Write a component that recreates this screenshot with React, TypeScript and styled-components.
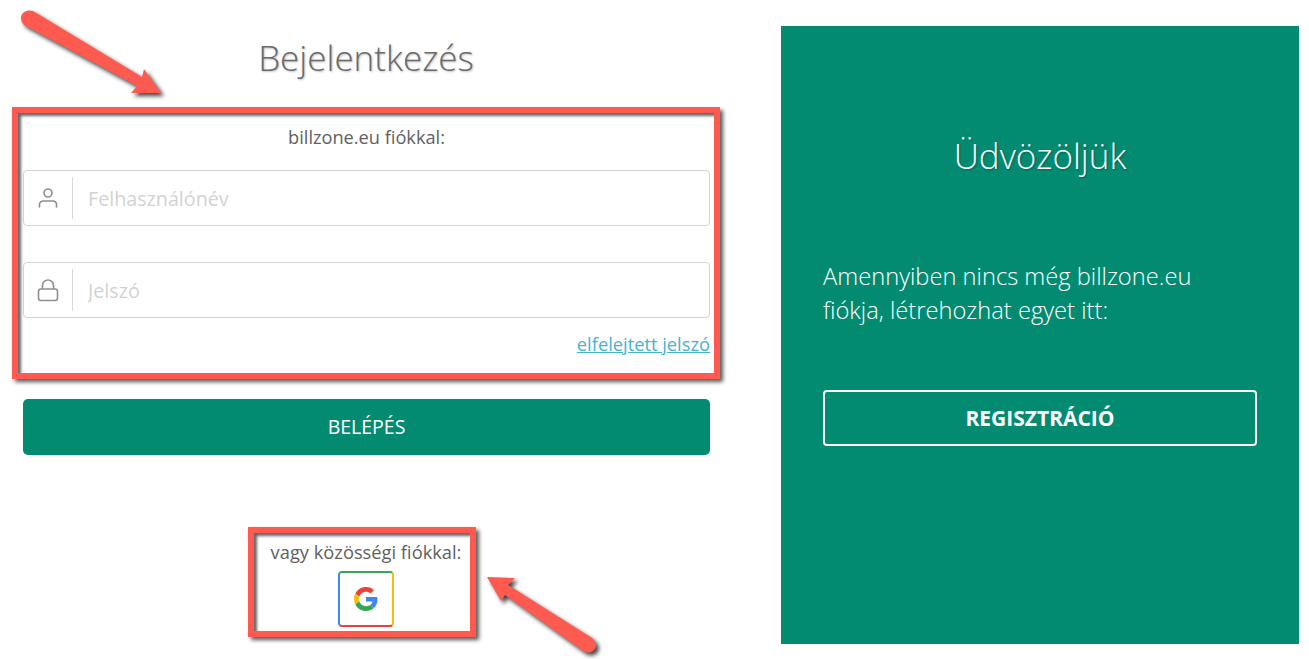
import styled, { createGlobalStyle } from 'styled-components';

const GlobalStyle = createGlobalStyle`
    html, body {
      margin: 0;
      padding: 0;
      background-color: #fff;
      font-family: "Open Sans", "Liberation Sans", sans-serif;
    }
`;

const Page = styled.div`
    position: relative;
    display: flex;
    align-items: flex-start;
    width: 1309px;
    height: 659px;
    overflow: hidden;
`;

const LoginColumn = styled.section`
    display: flex;
    flex-direction: column;
    width: 708px;
    margin-left: 12px;
`;

const Title = styled.h1`
    margin: 35px 0 27px;
    font-size: 35px;
    line-height: 45px;
    font-weight: 300;
    text-align: center;
    color: #6a6a6a;
    text-shadow: 1px 1px 2px rgba(0, 0, 0, 0.25);
`;

const HighlightBox = styled.div`
    box-sizing: border-box;
    border: 6px solid #ff5a4f;
    background-color: #fff;
    box-shadow: 3px 3px 4px rgba(0, 0, 0, 0.65), inset 3px 3px 3px rgba(0, 0, 0, 0.6);
`;

const LoginForm = styled(HighlightBox)`
    display: flex;
    flex-direction: column;
    padding: 14px 4px 19px 5px;
`;

const FormLabel = styled.div`
    margin-bottom: 23px;
    font-size: 18.2px;
    line-height: 20px;
    text-align: center;
    color: #5f5f5f;
`;

const Field = styled.label<{ $last?: boolean }>`
    display: flex;
    align-items: center;
    box-sizing: border-box;
    height: 56px;
    margin-bottom: ${(p) => (p.$last ? '0' : '36px')};
    border: 1px solid #d4d4d4;
    border-radius: 4px;
`;

const FieldIcon = styled.span`
    display: flex;
    align-items: center;
    justify-content: center;
    width: 48px;
    height: 42px;
    border-right: 1px solid #d9d9d9;
    color: #8e8e8e;
`;

const FieldInput = styled.input`
    flex: 1;
    min-width: 0;
    padding: 0 0 0 15px;
    border: none;
    outline: none;
    background: transparent;
    font-family: "Open Sans", "Liberation Sans", sans-serif;
    font-size: 19.7px;
    &::placeholder {
      color: #d2d2d2;
      opacity: 1;
    }
`;

const ForgotLink = styled.a`
    align-self: flex-end;
    margin-top: 16px;
    font-size: 18.3px;
    line-height: 20px;
    color: #45b4cc;
    text-decoration: underline;
`;

const LoginButton = styled.button`
    height: 56px;
    margin: 20px 10px 0 11px;
    padding: 0 0 2px;
    border: none;
    border-radius: 5px;
    background-color: #038b72;
    color: #fff;
    font-family: "Open Sans", "Liberation Sans", sans-serif;
    font-size: 19.5px;
    font-weight: 500;
`;

const SocialBox = styled(HighlightBox)`
    display: flex;
    flex-direction: column;
    align-items: center;
    align-self: flex-start;
    width: 228px;
    height: 110px;
    margin: 72px 0 0 236px;
    padding: 9px 10px 0 18px;
`;

const SocialLabel = styled.div`
    margin-bottom: 9px;
    font-size: 18.3px;
    line-height: 20px;
    white-space: nowrap;
    color: #5f5f5f;
`;

const GoogleButton = styled.button`
    display: flex;
    align-items: center;
    justify-content: center;
    box-sizing: border-box;
    width: 56px;
    height: 56px;
    padding: 0;
    border: 2px solid;
    border-color: #34a853 #fbbc05 #ea4335 #4285f4;
    border-radius: 4px;
    background-color: #fff;
`;

const WelcomePanel = styled.aside`
    display: flex;
    flex-direction: column;
    box-sizing: border-box;
    width: 518px;
    height: 618px;
    margin: 26px 0 0 61px;
    padding: 0 42px;
    background-color: #038b72;
    color: #fff;
`;

const WelcomeTitle = styled.h2`
    margin: 105px 0 78px;
    font-size: 35px;
    line-height: 50px;
    font-weight: 300;
    text-align: center;
    text-shadow: 1px 1px 2px rgba(0, 0, 0, 0.3);
`;

const WelcomeText = styled.p`
    max-width: 400px;
    margin: 0 0 63px;
    font-size: 23.7px;
    line-height: 34px;
    font-weight: 300;
`;

const RegisterButton = styled.button`
    box-sizing: border-box;
    height: 56px;
    border: 2px solid #fff;
    border-radius: 4px;
    background: transparent;
    color: #fff;
    font-family: "Open Sans", "Liberation Sans", sans-serif;
    font-size: 21px;
    font-weight: 700;
`;

const ArrowLayer = styled.svg`
    position: absolute;
    top: 0;
    left: 0;
    pointer-events: none;
    filter: drop-shadow(3px 3px 2px rgba(0, 0, 0, 0.75));
`;

function UserIcon() {
    return (
        <svg width="22" height="22" viewBox="0 0 22 22" fill="none" stroke="currentColor" strokeWidth="1.6" strokeLinecap="round">
            <circle cx="11" cy="6" r="4" />
            <path d="M2.5 20v-2.5c0-2.2 1.8-3.5 4-3.5h9c2.2 0 4 1.3 4 3.5V20" />
        </svg>
    );
}

function LockIcon() {
    return (
        <svg width="24" height="24" viewBox="0 0 24 24" fill="none" stroke="currentColor" strokeWidth="1.6">
            <rect x="2.5" y="11" width="19" height="11.5" rx="2.5" />
            <path d="M6.5 11V7.5a5.5 5.5 0 0 1 11 0V11" />
        </svg>
    );
}

function GoogleIcon() {
    return (
        <svg width="24" height="24" viewBox="0 0 48 48">
            <path fill="#EA4335" d="M24 9.5c3.5 0 6.6 1.2 9.1 3.6l6.8-6.8C35.8 2.5 30.4 0 24 0 14.6 0 6.5 5.4 2.6 13.2l7.9 6.1C12.4 13.7 17.7 9.5 24 9.5z" />
            <path fill="#4285F4" d="M46.9 24.5c0-1.6-.2-3.1-.4-4.5H24v9h12.9c-.6 3-2.2 5.5-4.7 7.2l7.7 6c4.5-4.2 7-10.3 7-17.7z" />
            <path fill="#FBBC05" d="M10.5 28.7c-.5-1.4-.8-3-.8-4.7s.3-3.3.8-4.7l-7.9-6.1C.9 16.5 0 20.1 0 24s.9 7.5 2.6 10.8l7.9-6.1z" />
            <path fill="#34A853" d="M24 48c6.5 0 11.9-2.1 15.9-5.8l-7.7-6c-2.2 1.4-4.9 2.3-8.2 2.3-6.3 0-11.6-4.2-13.5-9.8l-7.9 6.1C6.5 42.6 14.6 48 24 48z" />
        </svg>
    );
}

function Arrows() {
    return (
        <ArrowLayer width="1309" height="659" viewBox="0 0 1309 659" fill="#ff5a4f">
            <path d="M33 11 L142 77 L144 69 L161 93 L131 93 L137 86 L24 25 Q19 20 22 14 Q26 9 33 11 Z" />
            <path d="M487 577 L515 578 L508 585 L592 638 Q598 644 595 649 Q590 655 583 651 L505 595 L501 601 Z" />
        </ArrowLayer>
    );
}

export default function App() {
    return (
        <Page>
            <GlobalStyle />
            <LoginColumn>
                <Title>Bejelentkezés</Title>
                <LoginForm>
                    <FormLabel>billzone.eu fiókkal:</FormLabel>
                    <Field>
                        <FieldIcon><UserIcon /></FieldIcon>
                        <FieldInput type="text" placeholder="Felhasználónév" />
                    </Field>
                    <Field $last>
                        <FieldIcon><LockIcon /></FieldIcon>
                        <FieldInput type="password" placeholder="Jelszó" />
                    </Field>
                    <ForgotLink href="#">elfelejtett jelszó</ForgotLink>
                </LoginForm>
                <LoginButton>BELÉPÉS</LoginButton>
                <SocialBox>
                    <SocialLabel>vagy közösségi fiókkal:</SocialLabel>
                    <GoogleButton aria-label="Google"><GoogleIcon /></GoogleButton>
                </SocialBox>
            </LoginColumn>
            <WelcomePanel>
                <WelcomeTitle>Üdvözöljük</WelcomeTitle>
                <WelcomeText>Amennyiben nincs még billzone.eu fiókja, létrehozhat egyet itt:</WelcomeText>
                <RegisterButton>REGISZTRÁCIÓ</RegisterButton>
            </WelcomePanel>
            <Arrows />
        </Page>
    );
}
